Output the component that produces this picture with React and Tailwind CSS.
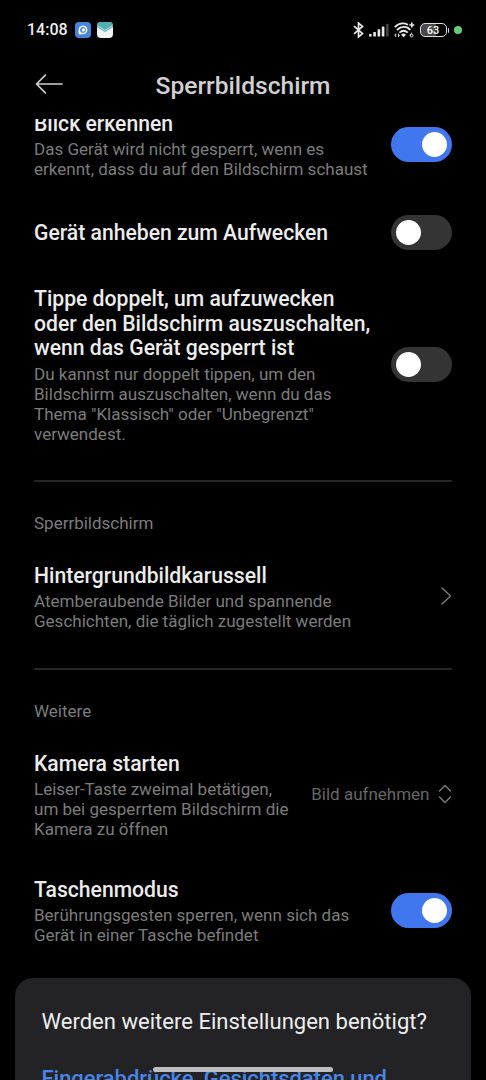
import React, { useState } from "react";

const Toggle = ({ defaultOn = false }) => {
  const [on, setOn] = useState(defaultOn);

  return (
    <button
      type="button"
      role="switch"
      aria-checked={on}
      onClick={() => setOn(!on)}
      className={`mb-[2px] flex h-[35px] w-[61px] shrink-0 items-center rounded-full px-[5px] ${
        on ? "justify-end bg-[#4177ee]" : "justify-start bg-[#343434]"
      }`}
    >
      <span className="h-[25px] w-[25px] rounded-full bg-white" />
    </button>
  );
};

const SettingRow = ({ title, description, children, className = "" }) => (
  <div className={`flex items-center justify-between ${className}`}>
    <div className="whitespace-nowrap">
      {title.map((line) => (
        <h2 key={line} className="text-[21.15px] leading-[24.7px] font-medium text-[#ececec]">
          {line}
        </h2>
      ))}
      {description && (
        <div className="pt-[4px]">
          {description.map((line) => (
            <p key={line} className="text-[17.02px] leading-[19.9px] text-[#7c7c7c]">
              {line}
            </p>
          ))}
        </div>
      )}
    </div>
    {children}
  </div>
);

const SectionLabel = ({ children }) => (
  <p className="mt-[31px] mb-[31px] text-[17px] leading-[20px] text-[#7c7c7c]">{children}</p>
);

const Divider = () => <div className="h-[1.5px] w-full bg-[#252525]" />;

const StatusBar = () => (
  <div className="flex h-[60px] items-center pr-6 pl-[27px]">
    <span className="w-[48px] text-[16px] leading-5 font-medium text-[#eeeeee]">14:08</span>

    {/* Notification icons */}
    <svg className="h-4 w-4" viewBox="0 0 16 16" fill="none">
      <rect width="16" height="16" rx="4" fill="#4584df" />
      <path d="M3.6 12.2V8a4.4 4.4 0 1 1 4.4 4.2Z" fill="#fff" />
      <circle cx="8" cy="7.9" r="2.9" fill="#4584df" />
      <path d="M6.9 9.6V7.8a1.6 1.6 0 1 1 1.600 1.600Z" fill="#fff" />
    </svg>
    <svg className="ml-[6px] h-4 w-4" viewBox="0 0 16 16" fill="none">
      <rect width="16" height="16" rx="4" fill="#eff5f4" />
      <path d="M0 5V4a4 4 0 0 1 4-4h8a4 4 0 0 1 4 4v1L8 10Z" fill="#53aeb4" />
      <path d="M1 4 8 8.500l7-4.500" stroke="#d5eeee" strokeWidth="0.8" />
    </svg>

    {/* Connectivity icons */}
    <svg className="ml-auto h-4 w-[11px]" viewBox="0 0 11 16" fill="none" stroke="#e8e8e8" strokeWidth="1.7">
      <path d="M1 4.2 9.5 11.6 5.5 15V1l4 3.4L1 11.8" />
    </svg>
    <svg className="ml-[5px] h-[14px] w-5" viewBox="0 0 20 14" fill="#e8e8e8">
      <rect x="0" y="11" width="2.6" height="2.6" rx="0.6" />
      <rect x="4.3" y="9" width="2.6" height="4.6" rx="0.6" />
      <rect x="8.6" y="6.2" width="2.6" height="7.4" rx="0.6" />
      <rect x="12.8" y="3.5" width="2.6" height="10.1" rx="0.6" />
      <rect x="17" y="0.8" width="2.6" height="12.8" rx="0.6" fill="#444" />
    </svg>
    <svg className="ml-[5px] h-4 w-[21px]" viewBox="0 0 21 16" fill="none" stroke="#e8e8e8" strokeWidth="1.8">
      <path d="M.8 5.2C5 .9 10 .8 14 2.8" />
      <path d="M2.9 8C7 4 13 4 16.2 7.8" />
      <path d="M5.4 10.7c2.5-2.3 5.900-2.300 8.400 0" />
      <path d="m7.2 12.7 2.4 2.6 2.4-2.6a3.4 3.4 0 0 0-4.8 0Z" fill="#e8e8e8" stroke="none" />
      <path d="M17.800 0.500v5M15.300 3h5" strokeWidth="1.6" />
      <path d="M1.7 11.5v3.4M.3 13.5l1.3-1.4M4.5 15v-3.4M5.8 13.2l-1.3 1.5" strokeWidth="0.9" />
      <path d="M18.2 10.8c-1.4.6-2 1.6-2 2.7" strokeWidth="1" />
      <circle cx="17.6" cy="13.6" r="1.4" strokeWidth="1" />
    </svg>
    <div className="ml-[5px] flex items-center">
      <div className="flex h-[14px] w-[27px] items-center justify-center rounded-[5px] border-[1.5px] border-[#dedede] bg-linear-to-r from-[#4a4a4a] from-60% to-black to-60% text-[11px] leading-none font-medium text-white">
        63
      </div>
      <div className="ml-px h-[5px] w-[1.5px] rounded-r bg-[#dedede]" />
    </div>
    <div className="ml-[5px] h-2 w-2 rounded-full bg-[#65cd77]" />
  </div>
);

const App = () => (
  <div className="relative flex h-[1080px] w-[486px] flex-col overflow-hidden bg-black font-['Roboto',sans-serif]">
    <StatusBar />

    {/* Header */}
    <header className="flex h-[59px] shrink-0 items-start pl-[35px]">
      <button type="button" aria-label="Zurück" className="mt-[14px]">
        <svg className="h-5 w-7" viewBox="0 0 28 20" fill="none" stroke="#cfcfcf" strokeWidth="1.7" strokeLinecap="round" strokeLinejoin="round">
          <path d="M27 10H1.5M10.3 1.2 1.5 10l8.8 8.8" />
        </svg>
      </button>
      <h1 className="ml-[92.5px] pt-[12px] text-[24.6px] leading-[28px] font-medium whitespace-nowrap text-[#d0d0d0]">
        Sperrbildschirm
      </h1>
    </header>

    {/* Scrolled settings list */}
    <main className="min-h-0 flex-1 overflow-hidden">
      <div className="-mt-[7.5px] px-[34px]">
        <SettingRow
          title={["Blick erkennen"]}
          description={["Das Gerät wird nicht gesperrt, wenn es", "erkennt, dass du auf den Bildschirm schaust"]}
        >
          <Toggle defaultOn />
        </SettingRow>
        {/* A single-line row takes its height from the toggle */}
        <SettingRow title={["Gerät anheben zum Aufwecken"]} className="mt-[34.5px]">
          <Toggle />
        </SettingRow>
        <SettingRow
          title={["Tippe doppelt, um aufzuwecken", "oder den Bildschirm auszuschalten,", "wenn das Gerät gesperrt ist"]}
          description={[
            "Du kannst nur doppelt tippen, um den",
            "Bildschirm auszuschalten, wenn du das",
            'Thema "Klassisch" oder "Unbegrenzt"',
            "verwendest.",
          ]}
          className="mt-[35.3px] mb-[35.7px]"
        >
          <Toggle />
        </SettingRow>

        <Divider />
        <SectionLabel>Sperrbildschirm</SectionLabel>
        <SettingRow
          title={["Hintergrundbildkarussell"]}
          description={["Atemberaubende Bilder und spannende", "Geschichten, die täglich zugestellt werden"]}
          className="mb-[36px]"
        >
          <svg className="mb-1 h-[18px] w-3" viewBox="0 0 12 18" fill="none" stroke="#777" strokeWidth="1.5" strokeLinecap="round" strokeLinejoin="round">
            <path d="m2 1 8.5 8L2 17" />
          </svg>
        </SettingRow>

        <Divider />
        <SectionLabel>Weitere</SectionLabel>
        <SettingRow
          title={["Kamera starten"]}
          description={["Leiser-Taste zweimal betätigen,", "um bei gesperrtem Bildschirm die", "Kamera zu öffnen"]}
        >
          <div className="mb-[3px] flex items-center gap-[8.5px] text-[17px] leading-5 text-[#666]">
            <span>Bild aufnehmen</span>
            <svg className="h-5 w-[14px]" viewBox="0 0 14 20" fill="none" stroke="#777" strokeWidth="1.5" strokeLinecap="round" strokeLinejoin="round">
              <path d="M1.5 7 7 1.5 12.5 7M1.5 13 7 18.5 12.5 13" />
            </svg>
          </div>
        </SettingRow>
        <SettingRow
          title={["Taschenmodus"]}
          description={["Berührungsgesten sperren, wenn sich das", "Gerät in einer Tasche befindet"]}
          className="mt-[37.5px]"
        >
          <Toggle defaultOn />
        </SettingRow>
      </div>

      {/* Suggestions */}
      <section className="mx-[15px] mt-[31.5px] h-40 rounded-[18px] bg-[#232325] px-[26.5px] pt-[31px] whitespace-nowrap">
        <h2 className="text-[22.05px] leading-[26px] text-[#eeeeee]">Werden weitere Einstellungen benötigt?</h2>
        <a href="#biometrie" className="mt-[31px] block text-[21.9px] leading-[26px] font-medium text-[#4886e5]">
          Fingerabdrücke, Gesichtsdaten und
        </a>
      </section>
    </main>

    {/* Gesture bar */}
    <div className="absolute bottom-[8px] left-[153px] h-[5px] w-[180px] rounded-full bg-[#bebebe]" />
  </div>
);

export default App;
